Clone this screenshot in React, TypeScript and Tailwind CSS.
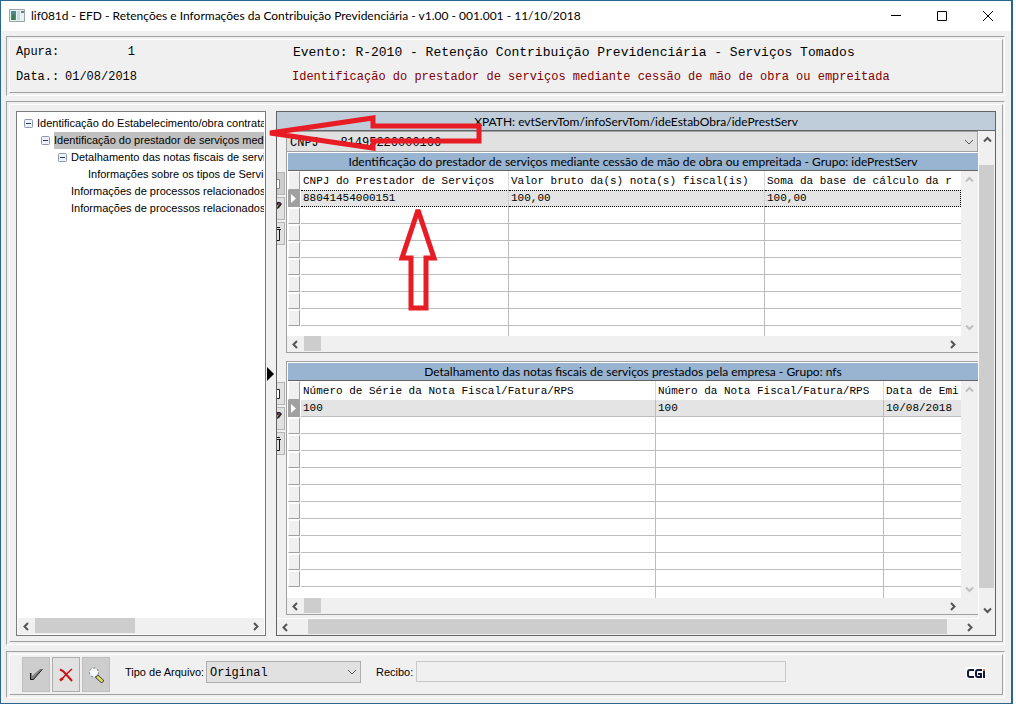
import type { ReactNode } from "react";

type Column = { label: string; width: string };

type GridProps = {
  title: string;
  columns: Column[];
  row: string[];
  emptyRows: number;
  focused?: boolean;
  className?: string;
  bodyClass: string;
};

type TreeItem = { label: string; indent: string; expandable?: boolean; selected?: boolean };

type Direction = "left" | "right" | "up" | "down";

const TREE: TreeItem[] = [
  { label: "Identificação do Estabelecimento/obra contratan", indent: "pl-[6px]", expandable: true },
  { label: "Identificação do prestador de serviços media", indent: "pl-[23px]", expandable: true, selected: true },
  { label: "Detalhamento das notas fiscais de serviç", indent: "pl-10", expandable: true },
  { label: "Informações sobre os tipos de Serviç", indent: "pl-[70px]" },
  { label: "Informações de processos relacionados a", indent: "pl-[53px]" },
  { label: "Informações de processos relacionados a", indent: "pl-[53px]" },
];

const PRESTADOR_COLUMNS: Column[] = [
  { label: "CNPJ do Prestador de Serviços", width: "w-[208px]" },
  { label: "Valor bruto da(s) nota(s) fiscal(is)", width: "w-[256px]" },
  { label: "Soma da base de cálculo da r", width: "" },
];

const NOTAS_COLUMNS: Column[] = [
  { label: "Número de Série da Nota Fiscal/Fatura/RPS", width: "w-[355px]" },
  { label: "Número da Nota Fiscal/Fatura/RPS", width: "w-[228px]" },
  { label: "Data de Emi", width: "" },
];

const MONO = "font-['Liberation_Mono',monospace] text-xs";
const MONO_SMALL = "font-['Liberation_Mono',monospace] text-[11px]";

const CHEVRONS: Record<Direction, string> = {
  left: "M6 1 2.5 4.5 6 8",
  right: "M3 1 6.5 4.5 3 8",
  up: "M1 6.5 4.5 3 8 6.5",
  down: "M1 2.5 4.5 6 8 2.5",
};

function ArrowButton({ dir, light, label }: { dir: Direction; light?: boolean; label: string }) {
  return (
    <button aria-label={label} className="flex size-[17px] shrink-0 items-center justify-center">
      <svg width="9" height="9" viewBox="0 0 9 9" fill="none" stroke={light ? "#bfbfbf" : "#555"} strokeWidth="2">
        <path d={CHEVRONS[dir]} />
      </svg>
    </button>
  );
}

function HScroll({ thumb }: { thumb: string }) {
  return (
    <div className="flex h-4 shrink-0 items-center bg-[#f0f0f0]">
      <ArrowButton dir="left" label="Rolar para a esquerda" />
      <div className="flex h-full flex-1">
        <div className={`h-[15px] bg-[#cdcdcd] ${thumb}`} />
      </div>
      <ArrowButton dir="right" label="Rolar para a direita" />
    </div>
  );
}

// double etched frame used by the three areas of the window
function Frame({ className = "", children }: { className?: string; children: ReactNode }) {
  return (
    <section className={`flex border border-t-[#a0a0a0] border-r-white border-b-white border-l-[#a0a0a0] bg-[#f0f0f0] p-[2px] pr-px ${className}`}>
      <div className="flex min-w-0 flex-1 border border-t-white border-r-[#a0a0a0] border-b-[#a0a0a0] border-l-white">
        {children}
      </div>
    </section>
  );
}

function Selector({ active }: { active?: boolean }) {
  return (
    <td className="p-0 pl-px">
      <div
        className={
          active
            ? "flex h-[17px] w-3 items-center justify-center bg-[#a0a0a0]"
            : "h-[17px] w-3 border-t-2 border-r border-b border-l border-t-white border-r-[#a0a0a0] border-b-[#a0a0a0] border-l-white bg-[#f0f0f0]"
        }
      >
        {active && (
          <svg width="6" height="9" viewBox="0 0 6 9">
            <path d="M0 0 5 4.5 0 9z" fill="#fff" />
          </svg>
        )}
      </div>
    </td>
  );
}

function DataGrid({ title, columns, row, emptyRows, focused, className = "", bodyClass }: GridProps) {
  return (
    <div className={`flex flex-col border-b border-l border-[#a0a0a0] bg-white ${className}`}>
      <h2 className="mt-px ml-px h-[18px] border-b border-[#646464] bg-[#99b4d1] text-center font-['Lato',sans-serif] text-xs leading-[18px]">
        {title}
      </h2>
      <div className={`flex ${bodyClass}`}>
        <div className="min-w-0 flex-1 overflow-hidden">
          <table className={`w-full table-fixed border-separate border-spacing-0 leading-4 ${MONO_SMALL}`}>
            <thead>
              <tr>
                <th className="w-[14px] p-0 pl-px">
                  <div className="h-[19px] w-3 border border-t-white border-r-[#a0a0a0] border-b-[#a0a0a0] border-l-white bg-[#f0f0f0]" />
                </th>
                {columns.map((c) => (
                  <th
                    key={c.label}
                    className={`h-[19px] overflow-hidden border-r border-[#d8d8d8] p-0 pl-[2px] text-left font-normal whitespace-nowrap last:border-r-0 ${c.width}`}
                  >
                    {c.label}
                  </th>
                ))}
              </tr>
            </thead>
            <tbody>
              <tr>
                <Selector active />
                {row.map((value, i) => (
                  <td
                    key={i}
                    className={`border-b bg-[#e4e4e4] p-0 pl-[2px] ${
                      focused
                        ? "border-t border-r border-dotted border-t-black border-r-[#bdbdbd] border-b-black last:border-r-black"
                        : "border-r border-[#bdbdbd] last:border-r-0"
                    }`}
                  >
                    <div className={focused ? "h-[15px] leading-[15px]" : "h-4"}>{value}</div>
                  </td>
                ))}
              </tr>
              {Array.from({ length: emptyRows }, (_, r) => (
                <tr key={r}>
                  <Selector />
                  {columns.map((c) => (
                    <td key={c.label} className="h-[17px] border-r border-b border-[#bdbdbd] p-0 last:border-r-0" />
                  ))}
                </tr>
              ))}
              <tr>
                <td className="p-0" />
                {columns.map((c) => (
                  <td key={c.label} className="h-[17px] border-r border-[#bdbdbd] p-0 last:border-r-0" />
                ))}
              </tr>
            </tbody>
          </table>
        </div>
        <div className="flex w-[17px] shrink-0 flex-col justify-between bg-[#f0f0f0]">
          <ArrowButton dir="up" light label="Rolar para cima" />
          <ArrowButton dir="down" light label="Rolar para baixo" />
        </div>
      </div>
      <div className="bg-[#f0f0f0] pr-[17px]">
        <HScroll thumb="w-[17px]" />
      </div>
    </div>
  );
}

function SideButtons({ className = "", dim }: { className?: string; dim?: boolean }) {
  const base = "flex h-[23px] w-2 items-center overflow-hidden border border-l-0 border-[#b4b4b4]";
  return (
    <div className={`flex flex-col gap-[2px] ${className}`}>
      <button aria-label="Incluir" className={`${base} ${dim ? "bg-[#cdcdcd]" : "bg-[#e1e1e1]"}`}>
        <svg width="4" height="12" viewBox="0 0 4 12" fill="none" stroke={dim ? "#8a8a8a" : "#222"}>
          <path d="M0 1.5H2.5V10.5H0" fill="#fff" />
        </svg>
      </button>
      <button aria-label="Alterar" className={`${base} bg-[#e1e1e1]`}>
        <svg width="5" height="14" viewBox="0 0 5 14">
          <path d="M0 0H3L5 2 2 6 0 7z" fill="#222" />
          <path d="M1 1h2v2H1z" fill="#80307c" />
          <path d="M0 3h2L0 6z" fill="#b4a028" />
        </svg>
      </button>
      <button aria-label="Excluir" className={`${base} bg-[#e1e1e1]`}>
        <svg width="5" height="16" viewBox="0 0 5 16" fill="none" stroke="#111">
          <path d="M0 1.5H3M0 3.5H4M2.5 4V14.5H0" />
        </svg>
      </button>
    </div>
  );
}

function SelectArrow() {
  return (
    <svg className="pointer-events-none absolute top-2 right-1" width="10" height="7" fill="none" stroke="#555">
      <path d="M1 1 5 5 9 1" />
    </svg>
  );
}

export default function App() {
  return (
    <div className="relative flex min-h-screen bg-white pr-[3px] font-['Liberation_Sans',sans-serif] text-[11px] text-black">
      <main className="flex min-w-0 flex-1 flex-col border border-[#2a6690] bg-[#f0f0f0]">
        <header className="flex h-[30px] shrink-0 items-center bg-white pl-2">
          <svg width="16" height="14" viewBox="0 0 16 14">
            <path d="M.5.5h15v12H.5z" fill="#e8f0f2" stroke="#9aa5a8" />
            <path d="M2 2h5v9H2z" fill="#4a8a8a" />
            <path d="M3 6h3v5H3z" fill="#3c7c50" />
            <path d="M8 2h3v9H8z" fill="#c4dce8" />
            <path d="M12 2h3v2h-3z" fill="#707c80" />
          </svg>
          <h1 className="ml-[6px] flex-1 font-['Lato',sans-serif] text-xs whitespace-nowrap">
            lif081d - EFD - Retenções e Informações da Contribuição Previdenciária - v1.00 - 001.001 - 11/10/2018
          </h1>
          <div className="flex">
            <button aria-label="Minimizar" className="flex h-[30px] w-[46px] items-center justify-center">
              <svg width="10" height="10">
                <path d="M0 4.5h10" stroke="#000" />
              </svg>
            </button>
            <button aria-label="Maximizar" className="flex h-[30px] w-[46px] items-center justify-center">
              <svg width="10" height="10" fill="none">
                <path d="M.5.5h9v9h-9z" stroke="#000" />
              </svg>
            </button>
            <button aria-label="Fechar" className="flex h-[30px] w-[46px] items-center justify-center">
              <svg width="10" height="10">
                <path d="M0 0 10 10M10 0 0 10" stroke="#000" />
              </svg>
            </button>
          </div>
        </header>

        <div className="flex flex-1 flex-col py-[5px] pr-[6px] pl-[5px]">
          <Frame className="h-[60px] shrink-0">
            <div className={`flex flex-1 ${MONO}`}>
              <dl className="w-[277px] pl-[6px] leading-[25px]">
                <div className="flex">
                  <dt className="w-[49px]">Apura:</dt>
                  <dd className="w-[70px] text-right">1</dd>
                </div>
                <div className="flex">
                  <dt className="w-[49px]">Data.:</dt>
                  <dd className="w-[70px] text-right">01/08/2018</dd>
                </div>
              </dl>
              <div className="whitespace-nowrap">
                <p className="pl-[6px] text-[13px] leading-[25px]">
                  Evento: R-2010 - Retenção Contribuição Previdenciária - Serviços Tomados
                </p>
                <p className="pl-[5px] leading-[25px] text-[#800000]">
                  Identificação do prestador de serviços mediante cessão de mão de obra ou empreitada
                </p>
              </div>
            </div>
          </Frame>

          <Frame className="mt-[5px] flex-1">
            <div className="flex min-w-0 flex-1 px-[6px] pt-[6px] pb-[5px]">
              <nav className="flex w-[250px] shrink-0 flex-col border border-[#7a7a7a] bg-white p-px">
                <ul className="flex-1 overflow-hidden pt-[2px]">
                  {TREE.map((item, i) => (
                    <li key={i} className={`flex h-[17px] items-center overflow-hidden ${item.indent}`}>
                      {item.expandable && (
                        <button aria-label="Recolher" className="mr-1 shrink-0">
                          <svg width="9" height="9" viewBox="0 0 9 9">
                            <rect x=".5" y=".5" width="8" height="8" rx="1" fill="#eef2f6" stroke="#8c98a8" />
                            <path d="M2 4.5h5" stroke="#223c70" />
                          </svg>
                        </button>
                      )}
                      <span className={`flex-1 overflow-hidden leading-[17px] whitespace-nowrap ${item.selected ? "bg-[#c0c0c0]" : ""}`}>
                        {item.label}
                      </span>
                    </li>
                  ))}
                </ul>
                <HScroll thumb="w-[100px]" />
              </nav>

              <div className="flex w-[10px] shrink-0 items-center">
                <svg width="8" height="14" viewBox="0 0 8 14">
                  <path d="M1 0 8 7 1 14z" />
                </svg>
              </div>

              <div className="flex min-w-0 flex-1 flex-col border border-[#646464]">
                <h2 className="h-[19px] shrink-0 border-b border-[#646464] bg-[#bfcddb] text-center font-['Lato',sans-serif] text-xs leading-5">
                  XPATH: evtServTom/infoServTom/ideEstabObra/idePrestServ
                </h2>
                <div className="flex flex-1">
                  <div className="flex min-w-0 flex-1 flex-col">
                    <div className="flex flex-1">
                      <div className="w-[9px] shrink-0 pt-[41px]">
                        <SideButtons dim />
                        <SideButtons className="mt-[137px]" />
                      </div>
                      <div className="min-w-0 flex-1">
                        <div className="relative">
                          <select
                            aria-label="CNPJ do prestador"
                            className={`block h-[21px] w-full appearance-none border border-[#a0a0a0] bg-[#e1e1e1] pt-[2px] pl-[3px] ${MONO}`}
                          >
                            <option>CNPJ - 81495226000166</option>
                          </select>
                          <SelectArrow />
                        </div>
                        <DataGrid
                          title="Identificação do prestador de serviços mediante cessão de mão de obra ou empreitada - Grupo: idePrestServ"
                          columns={PRESTADOR_COLUMNS}
                          row={["88041454000151", "100,00", "100,00"]}
                          emptyRows={7}
                          focused
                          bodyClass="h-[165px]"
                        />
                        <DataGrid
                          title="Detalhamento das notas fiscais de serviços prestados pela empresa - Grupo: nfs"
                          columns={NOTAS_COLUMNS}
                          row={["100", "100", "10/08/2018"]}
                          emptyRows={10}
                          className="mt-2 border-t"
                          bodyClass="h-[217px]"
                        />
                      </div>
                    </div>
                    <div className="border-t border-white">
                      <HScroll thumb="ml-[14px] mr-[14px] flex-1" />
                    </div>
                  </div>
                  <div className="mb-4 flex w-[17px] shrink-0 flex-col border-l border-white">
                    <ArrowButton dir="up" label="Rolar para cima" />
                    <div className="mt-[17px] mb-[14px] w-[15px] flex-1 bg-[#cdcdcd]" />
                    <ArrowButton dir="down" label="Rolar para baixo" />
                  </div>
                </div>
              </div>
            </div>
          </Frame>

          <Frame className="mt-[6px] h-[47px] shrink-0">
            <div className="flex flex-1 items-start pt-[2px] pr-4 pl-3">
              <div className="flex gap-[2px]">
                <button aria-label="Confirmar" className="flex h-[35px] w-7 items-center justify-center border border-[#bfbfbf] bg-[#cdcdcd]">
                  <svg width="14" height="13" viewBox="0 0 14 13">
                    <path d="M1 5H3V8L11 1H13L4 12H1z" fill="#808080" />
                    <path d="M1.5 5V11.5H4.5L13.5 1" fill="none" stroke="#111" />
                  </svg>
                </button>
                <button aria-label="Cancelar" className="flex h-[35px] w-7 items-center justify-center border border-[#adadad] bg-[#e1e1e1]">
                  <svg width="14" height="14" viewBox="0 0 14 14" fill="none" stroke="#cc1414">
                    <path d="M1 1.5 4 3 10 9.5 13 13" strokeWidth="2" />
                    <path d="M13 1 7.5 6 1.5 12.5" strokeWidth="1.5" />
                    <path d="M1 12.5 4 10" strokeWidth="2.5" />
                  </svg>
                </button>
                <button aria-label="Pesquisar" className="flex h-[35px] w-7 items-center justify-center border border-[#bfbfbf] bg-[#cdcdcd]">
                  <svg width="16" height="16" viewBox="0 0 16 16">
                    <circle cx="6" cy="5.5" r="4.5" fill="#f4f8fa" />
                    <circle cx="6" cy="5.5" r="4.5" fill="none" stroke="#666" strokeDasharray="2 2" />
                    <path d="M8.5 9 15 15" stroke="#333" strokeWidth="4" />
                    <path d="M9 9.5 14.5 14.5" stroke="#dcdc64" strokeWidth="2.5" />
                  </svg>
                </button>
              </div>
              <label htmlFor="tipo" className="ml-[15px] w-[81px] pt-[3px] leading-6 whitespace-nowrap">
                Tipo de Arquivo:
              </label>
              <div className="relative mt-1">
                <select id="tipo" className={`block h-[22px] w-[155px] appearance-none border border-[#adadad] bg-[#e1e1e1] pt-px pl-[3px] ${MONO}`}>
                  <option>Original</option>
                </select>
                <SelectArrow />
              </div>
              <label htmlFor="recibo" className="ml-[15px] w-10 pt-[3px] leading-6">
                Recibo:
              </label>
              <input id="recibo" className={`mt-1 h-[21px] w-[370px] border border-[#c8c8c8] bg-[#f0f0f0] px-1 ${MONO}`} />
              <svg className="mt-[10px] ml-auto" width="20" height="12" viewBox="0 0 20 12" fill="none" stroke="#14183c" strokeWidth="2">
                <path d="M0 0H20V12H0z" fill="#fff" stroke="none" />
                <path d="M8 3H4Q2 3 2 5V8Q2 10 4 10H8" />
                <path d="M16 3H12Q10 3 10 5V8Q10 10 12 10H15V7H12M18 4V11" />
                <path d="M18 2V4" stroke="#e08050" />
              </svg>
            </div>
          </Frame>
        </div>
      </main>
      <div className="w-px bg-[#2a6690]" />

      <svg
        className="pointer-events-none absolute top-0 left-0"
        width="500"
        height="320"
        viewBox="0 0 500 320"
        fill="none"
        stroke="#e81c24"
        strokeWidth="5"
        strokeMiterlimit="2"
      >
        <path d="M270 133 373 118V126H479V141H373V148Z" />
        <path d="M418 210 402 258H411V308H426V258H434Z" />
      </svg>
    </div>
  );
}
